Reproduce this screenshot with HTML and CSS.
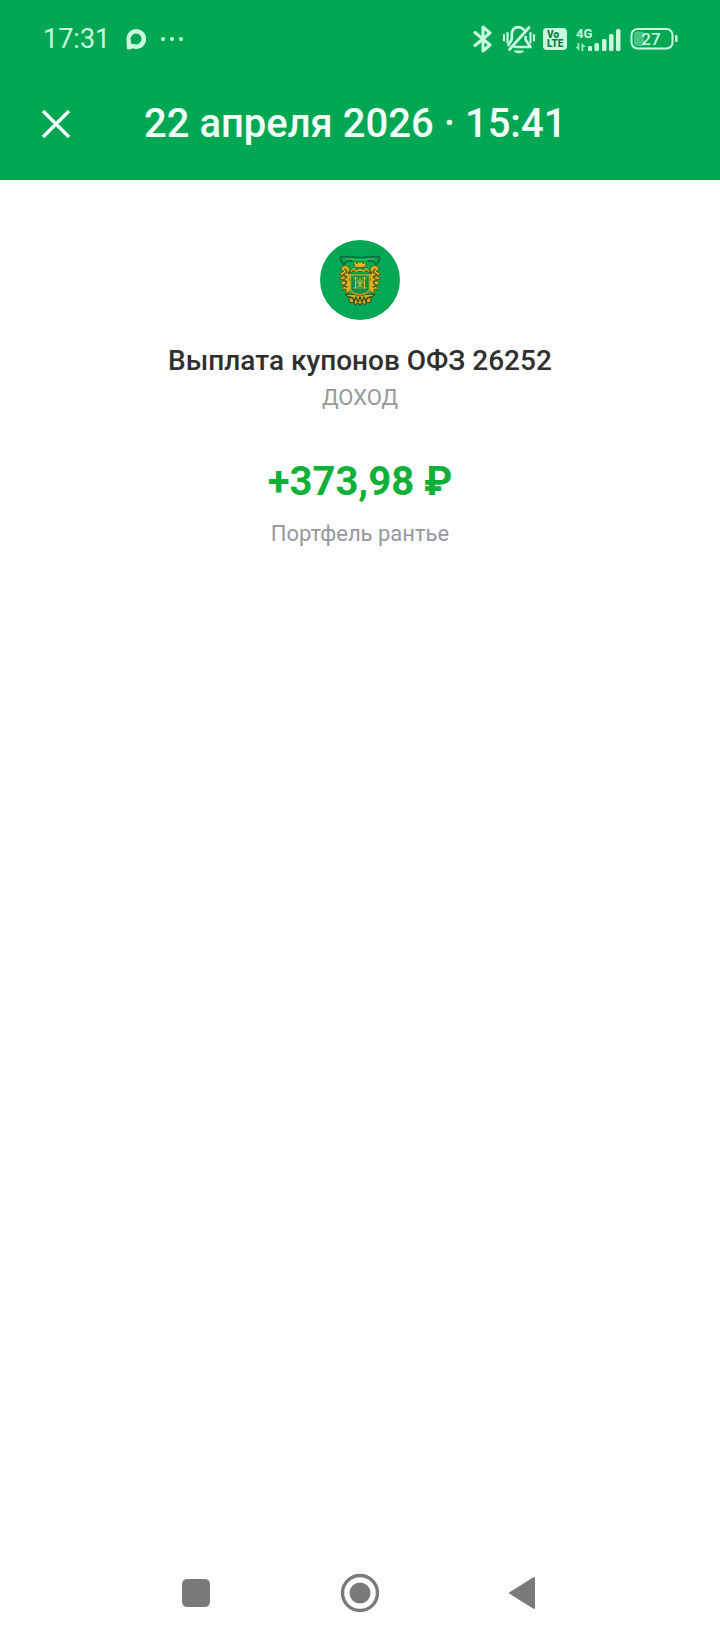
FILE: index.html
```html
<!DOCTYPE html>
<html lang="ru">
<head>
<meta charset="utf-8">
<meta name="viewport" content="width=device-width, initial-scale=1">
<title>Выплата купонов</title>
<link rel="stylesheet" href="styles.css">
</head>
<body>
<div class="screen">
  <header class="header">
    <div class="status">
      <div class="status-left">
        <time class="clock">17:31</time>
        <svg class="chat-icon" width="20" height="22" viewBox="0 0 20 22"><path fill="currentColor" fill-rule="evenodd" d="M10 1a10 10 0 1 1-3.500 19.300C5 21.600 3 21.600 1 21.200L.4 11A10 10 0 0 1 10 1zM10 5.600a5.400 5.400 0 0 0-5 7.400c.5 1.400.1 2.500.4 3.300.8 0 1.300-.6 2.200-.5A5.400 5.400 0 1 0 10 5.600z"/></svg>
        <svg class="dots-icon" width="24" height="6" viewBox="0 0 24 6" fill="currentColor"><circle cx="3" cy="3" r="2"/><circle cx="12" cy="3" r="2"/><circle cx="21" cy="3" r="2"/></svg>
      </div>
      <div class="status-right">
        <svg width="20" height="30" viewBox="0 0 20 30" fill="none" stroke="currentColor" stroke-width="3" stroke-linejoin="round" stroke-linecap="round"><path d="M2 8.500 17 21 10 27V3l7 6L2 21.500"/></svg>
        <svg class="bell-icon" width="34" height="30" viewBox="0 0 34 30" fill="none" stroke="currentColor" stroke-width="2.700" stroke-linecap="round" stroke-linejoin="round"><path d="M21.500 5.500C20 4 18.500 3.200 16.700 3.200 12 3.200 9.800 6.500 9.800 11v4.500L6.500 21M23.700 13v3l4.800 7H13M27 3.500 7.500 25.500"/><path d="M2 11v5.500M5.500 9v9.500M28.500 9v9.500M32 11v5.500" stroke-width="2.200"/><path d="M12.500 27h9c-1 2-7.500 3-9 0z" fill="currentColor" stroke-width="1"/></svg>
        <svg width="24" height="24" viewBox="0 0 24 24"><rect width="24" height="22" y="1" rx="4" fill="currentColor"/><text class="volte" x="4" y="11">Vo</text><text class="volte" x="4" y="20">LTE</text></svg>
        <svg class="signal-icon" width="46" height="26" viewBox="0 0 46 26" fill="currentColor"><text class="network" x="1" y="12">4G</text><path d="M2.500 17h1.800v8L.5 21h2zM6.500 25v-8l4.500 4H8.300v4z" opacity=".8"/><rect x="13" y="20" width="4" height="5" rx="1"/><rect x="19.500" y="17" width="4.500" height="8" rx="1.500"/><rect x="27" y="13" width="4.500" height="12" rx="1.500"/><rect x="34" y="8" width="4.500" height="17" rx="1.500"/><rect x="41" y="3" width="4.500" height="22" rx="1.500"/></svg>
        <svg class="battery-icon" width="48" height="24" viewBox="0 0 48 24"><rect x="4" y="4.500" width="10" height="14.500" rx="3" fill="currentColor" opacity=".35"/><rect x="1.500" y="2" width="41" height="19.500" rx="6" fill="none" stroke="currentColor" stroke-width="2"/><rect x="45" y="8" width="2.500" height="7" rx="1" fill="currentColor"/><text class="charge" x="21" y="18" text-anchor="middle">27</text></svg>
      </div>
    </div>
    <div class="titlebar">
      <button class="close" type="button" aria-label="Закрыть">
        <svg width="30" height="30" viewBox="0 0 30 30" fill="none" stroke="currentColor" stroke-width="3.400"><path d="M2 2 28 28M28 2 2 28"/></svg>
      </button>
      <h1 class="title">22 апреля 2026 · 15:41</h1>
    </div>
  </header>

  <main class="details">
    <svg class="emblem" width="80" height="80" viewBox="0 0 80 80" fill="none" stroke-linecap="round" stroke-linejoin="round">
      <circle cx="40" cy="40" r="40" fill="#04a854"/>
      <path d="M21 16c4 3 8-1 13 1 5 1 7 1 12 0 5-2 9 2 13-1M21 16c-2 4 1 6 3 9 1-4 4-5 8-4M59 16c2 4-1 6-3 9-1-4-4-5-8-4" stroke="#086536" stroke-width="1.500"/>
      <path d="M26 19q14 2 28 0" stroke="#7ab044" stroke-width="1"/>
      <path d="M35 27c-2-5-1-6 1-5l1 2 1-3 2 2 2-2 1 3c3-3 4-1 2 3z" fill="#e8bb1b" stroke="#4d6925" stroke-width="1"/>
      <path d="M30 31c-1-5-4-7-8-4l-1 3 3 1-5 3 4 2-4 3 5 1-4 4 4 1-2 5 4-1v5l5-4 1-7-3-3 3-4zM50 31c1-5 4-7 8-4l1 3-3 1 5 3-4 2 4 3-5 1 4 4-4 1 2 5-4-1v5l-5-4-1-7 3-3-3-4z" fill="#dfb51c" stroke="#58651d" stroke-width="1"/>
      <path d="m25 29 2 3-4 3 4 2-4 3 4 2-3 4 3 1M55 29l-2 3 4 3-4 2 4 3-4 2 3 4-3 1" stroke="#5b5717" stroke-width="1.400"/>
      <path d="M25 54c3 2 2 4 5 3-2 3-1 5 1 6l3-1 1 3 3-2 2 2 2-2 3 2 1-3 3 1c2-1 3-3 1-6 3 1 2-1 5-3-6 1-9-1-15 2-6-3-9-1-15-2z" fill="#d3ac1c" stroke="#3c5420" stroke-width="1.100"/>
      <path d="m29 57 4 1 1 4 2-5 2 5 2-5 2 5 2-5 2 5 1-4 4-1" stroke="#394b1b" stroke-width="1.300"/>
      <path d="M30.500 35h19v14c0 3-3 4-9.500 6-6.500-2-9.500-3-9.500-6z" fill="#079047" stroke="#b8a52a" stroke-width="1.500"/>
      <path d="M33.500 38h4M42.500 38h4M35.500 38v10M44.500 38v10M40 38v11M35.500 43h9M33.500 48h4M42.500 48h4M37.500 40l5 7M42.500 40l-5 7" stroke="#d4bd40" stroke-width="1"/>
      <path d="M29 33c3-5 7-2 11-2s8-3 11 2" stroke="#43531c" stroke-width="2.500"/>
      <path d="m31 31 3-2 2 2 4-1 4 1 2-2 3 2" stroke="#e4b71c" stroke-width="1.500"/>
    </svg>
    <h2 class="name">Выплата купонов ОФЗ 26252</h2>
    <p class="caption">ДОХОД</p>
    <p class="amount">+373,98 ₽</p>
    <p class="caption portfolio">Портфель рантье</p>
  </main>

  <nav class="navbar" aria-label="Системная навигация">
    <button type="button" aria-label="Недавние"><svg width="40" height="40" viewBox="0 0 40 40"><rect x="6" y="6" width="28" height="28" rx="5" fill="currentColor"/></svg></button>
    <button type="button" aria-label="Домой"><svg width="40" height="40" viewBox="0 0 40 40"><circle cx="20" cy="20" r="17.500" fill="none" stroke="currentColor" stroke-width="3.400"/><circle cx="20" cy="20" r="10.500" fill="currentColor"/></svg></button>
    <button type="button" aria-label="Назад"><svg width="40" height="40" viewBox="0 0 40 40"><path d="M6 20 30 5v30z" fill="currentColor" stroke="currentColor" stroke-width="2" stroke-linejoin="round"/></svg></button>
  </nav>
</div>
</body>
</html>
```
FILE: styles.css
```css
* {
  box-sizing: border-box;
  margin: 0;
}

body {
  font-family: Roboto, "Noto Sans", sans-serif;
  background: #fefefe;
}

svg {
  display: block;
  flex: none;
}

button {
  padding: 0;
  border: 0;
  background: none;
  color: inherit;
  display: flex;
  align-items: center;
  justify-content: center;
}

.screen {
  min-height: 100vh;
  display: flex;
  flex-direction: column;
}

.header {
  background: #02a754;
  color: #f2fff9;
}

.status {
  display: flex;
  justify-content: space-between;
  align-items: center;
  height: 78px;
  padding: 0 42px 0 43px;
  color: #cbfbdf;
}

.status-left,
.status-right {
  display: flex;
  align-items: center;
}

.clock {
  font-size: 27px;
  line-height: 32px;
}

.chat-icon {
  margin-left: 16px;
}

.dots-icon {
  margin-left: 14px;
}

.bell-icon {
  margin: 0 7px 0 9px;
}

.signal-icon {
  margin: 0 9px 0 8px;
}

.volte {
  font-size: 10px;
  font-weight: 900;
  fill: #087d43;
}

.network {
  font-size: 13px;
  font-weight: 700;
}

.charge {
  font-size: 17px;
  font-weight: 500;
  fill: #cbfbdf;
}

.titlebar {
  display: flex;
  align-items: center;
  height: 102px;
  padding: 0 32px 10px;
}

.close {
  width: 48px;
  height: 48px;
}

.title {
  margin-left: 64px;
  font-size: 40px;
  font-weight: 500;
  line-height: 48px;
}

.details {
  flex: 1;
  display: flex;
  flex-direction: column;
  align-items: center;
  padding: 60px 32px;
  text-align: center;
}

.name {
  margin-top: 23px;
  font-size: 28px;
  font-weight: 500;
  line-height: 36px;
  color: #303030;
}

.caption {
  margin-top: 3px;
  font-size: 22px;
  line-height: 32px;
  color: #96999b;
}

.amount {
  margin-top: 44px;
  font-size: 40px;
  font-weight: 700;
  line-height: 48px;
  color: #0fb038;
}

.portfolio {
  margin-top: 12px;
}

.navbar {
  display: flex;
  justify-content: center;
  align-items: center;
  gap: 100px;
  height: 94px;
  color: #7a7a7a;
}

.navbar button {
  width: 64px;
  height: 64px;
}
```
